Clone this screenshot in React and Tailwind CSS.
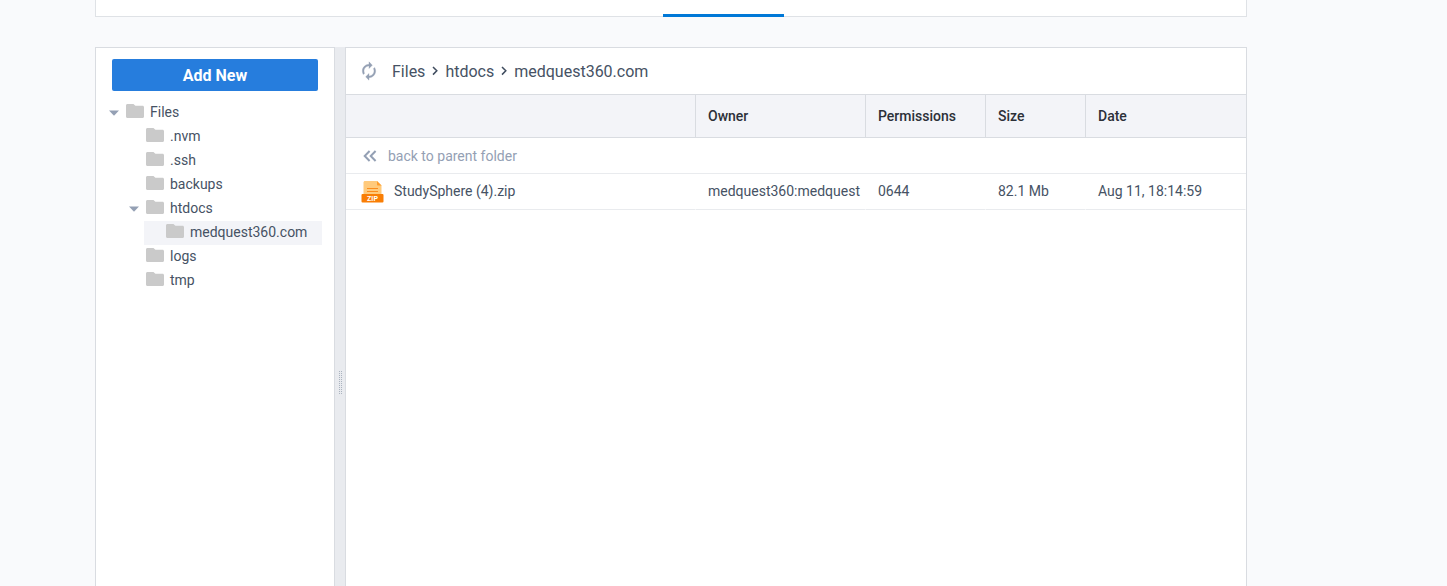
import React from "react";

const tree = [
  { name: "Files", level: 0, open: true },
  { name: ".nvm", level: 1 },
  { name: ".ssh", level: 1 },
  { name: "backups", level: 1 },
  { name: "htdocs", level: 1, open: true },
  { name: "medquest360.com", level: 2, selected: true },
  { name: "logs", level: 1 },
  { name: "tmp", level: 1 },
];

const indent = ["ml-0", "ml-5", "ml-10"];

const crumbs = ["Files", "htdocs", "medquest360.com"];

function Caret() {
  return (
    <svg viewBox="0 0 10 6" className="h-1.5 w-2.5" fill="#94a0b4" aria-hidden="true">
      <path d="M0 .5h10L5 5.7z" />
    </svg>
  );
}

function Folder() {
  return (
    <svg viewBox="0 0 18 14" className="h-[14px] w-[18px] shrink-0" fill="#cacaca" aria-hidden="true">
      <path d="M1.5 0h5.4c.5 0 .8.15 1.1.5L9.4 1.8h7.1c.9 0 1.5.6 1.5 1.5v9.2c0 .9-.6 1.5-1.5 1.5h-15C.6 14 0 13.4 0 12.5V1.5C0 .6.6 0 1.5 0z" />
    </svg>
  );
}

function Refresh() {
  return (
    <svg viewBox="0 0 24 24" className="size-5" fill="#94a0b4" stroke="#94a0b4" strokeWidth="0.4" aria-hidden="true">
      <path d="M12 6v3l4-4-4-4v3c-4.42 0-8 3.58-8 8 0 1.57.46 3.03 1.24 4.26L6.7 14.8c-.45-.83-.7-1.79-.7-2.8 0-3.31 2.69-6 6-6zm6.76 1.74L17.3 9.2c.44.84.7 1.79.7 2.8 0 3.31-2.69 6-6 6v-3l-4 4 4 4v-3c4.42 0 8-3.58 8-8 0-1.57-.46-3.03-1.24-4.26z" />
    </svg>
  );
}

function Chevron() {
  return (
    <svg viewBox="0 0 20 20" className="size-5" fill="none" stroke="#3f4c5e" strokeWidth="1.5" aria-hidden="true">
      <path d="M8 6l3.8 3.8L8 13.6" />
    </svg>
  );
}

function DoubleChevron() {
  return (
    <svg viewBox="0 0 14 12" className="h-3 w-3.5" fill="none" stroke="#94a0b4" strokeWidth="2" aria-hidden="true">
      <path d="M6.6 1L1.7 6l4.9 5M12.6 1L7.7 6l4.9 5" />
    </svg>
  );
}

function ZipIcon() {
  return (
    <svg viewBox="0 0 24 24" className="size-6 shrink-0" aria-hidden="true">
      <path d="M5 1h12L21.5 5.5V16H3.500V2.500C3.500 1.600 4.100 1 5 1z" fill="#ffca7c" />
      <path d="M17 1l4.500 4.500H18c-.6 0-1-.4-1-1z" fill="#ff9c2b" />
      <path d="M7 8.500h11M7 11.500h11" stroke="#fb8c1c" strokeWidth="1" />
      <rect x="1.500" y="14" width="22" height="8.500" rx="1" fill="#f97e05" />
      <text x="12.500" y="20.800" textAnchor="middle" fill="#fff" fontSize="7" fontWeight="700" fontFamily="Roboto, sans-serif">
        ZIP
      </text>
    </svg>
  );
}

function Sidebar() {
  return (
    <aside className="w-60 shrink-0 border border-b-0 border-[#d9dce1] bg-white pt-[11px]">
      <div className="px-4">
        <button type="button" className="h-8 w-full rounded-xs bg-[#267ddd] pt-0.5 text-base font-bold text-white">
          Add New
        </button>
      </div>
      <ul className="mt-[10px] pr-3 pl-2">
        {tree.map((n) => (
          <li key={n.name} className={indent[n.level]}>
            <a href="#" className={`flex h-6 items-center text-sm leading-[22px] ${n.selected ? "bg-[#f3f4f8]" : ""}`}>
              <span className="flex w-[22px] shrink-0 pl-[5px]">{n.open && <Caret />}</span>
              <span className="pb-1">
                <Folder />
              </span>
              <span className="ml-1.5 pb-0.5">{n.name}</span>
            </a>
          </li>
        ))}
      </ul>
    </aside>
  );
}

function Splitter() {
  return (
    <div role="separator" className="flex w-2.5 shrink-0 flex-col bg-[#e9ebef] pt-[324px] pl-1">
      <svg viewBox="0 0 4 24" className="h-6 w-1" fill="#aab3bf" aria-hidden="true">
        {[0, 2, 4, 6, 8, 10, 12, 14, 16, 18, 20, 22].map((y) => (
          <g key={y}>
            <rect x="0" y={y} width="1" height="1" />
            <rect x="2" y={y} width="1" height="1" />
          </g>
        ))}
      </svg>
    </div>
  );
}

const th = "h-[43px] border-r border-b border-[#d9dce1] px-3 text-left font-medium text-[#2c3038]";
const td = "h-9 overflow-hidden border-r border-b border-r-transparent border-b-[#e9ebee] pb-0.5 pl-3 whitespace-nowrap";

function Files() {
  return (
    <main className="min-w-0 flex-1 border border-b-0 border-[#d9dce1] bg-white">
      <nav className="flex h-[47px] items-center border-b border-[#d9dce1] pl-[13px] text-base">
        <button type="button" aria-label="Refresh" className="mr-[13px]">
          <Refresh />
        </button>
        {crumbs.map((c, i) => (
          <React.Fragment key={c}>
            {i > 0 && <Chevron />}
            <a href="#" className="pt-0.5">
              {c}
            </a>
          </React.Fragment>
        ))}
      </nav>
      <table className="w-full table-fixed border-separate border-spacing-0 text-sm">
        <colgroup>
          <col />
          <col className="w-[170px]" />
          <col className="w-[120px]" />
          <col className="w-[100px]" />
          <col className="w-[160px]" />
        </colgroup>
        <thead className="bg-[#f3f4f8]">
          <tr>
            <th className={th} aria-label="Name"></th>
            <th className={th}>Owner</th>
            <th className={th}>Permissions</th>
            <th className={th}>Size</th>
            <th className="h-[43px] border-b border-[#d9dce1] px-3 text-left font-medium text-[#2c3038]">Date</th>
          </tr>
        </thead>
        <tbody>
          <tr>
            <td colSpan={5} className="h-9 border-b border-[#e9ebee] pl-[17px]">
              <a href="#" className="flex items-center gap-[11px] text-[#94a0b4]">
                <DoubleChevron />
                back to parent folder
              </a>
            </td>
          </tr>
          <tr>
            <td className="h-9 border-r border-b border-r-transparent border-b-[#e9ebee] pl-3.5">
              <a href="#" className="flex items-center gap-2.5">
                <ZipIcon />
                <span className="pb-0.5">StudySphere (4).zip</span>
              </a>
            </td>
            <td className={td}>medquest360:medquest</td>
            <td className={td}>0644</td>
            <td className={td}>82.1 Mb</td>
            <td className={td}>Aug 11, 18:14:59</td>
          </tr>
        </tbody>
      </table>
    </main>
  );
}

export default function App() {
  return (
    <div className="flex min-h-screen flex-col bg-[#f9fafc] pr-[200px] pl-[95px] font-['Roboto',sans-serif] text-[#465264]">
      <header className="flex h-[17px] justify-center border border-t-0 border-[#dfe2e6] bg-white">
        <div className="-mb-px ml-[105px] w-[121px] border-b-3 border-[#0078d7]"></div>
      </header>
      <div className="mt-[30px] flex flex-1">
        <Sidebar />
        <Splitter />
        <Files />
      </div>
    </div>
  );
}
